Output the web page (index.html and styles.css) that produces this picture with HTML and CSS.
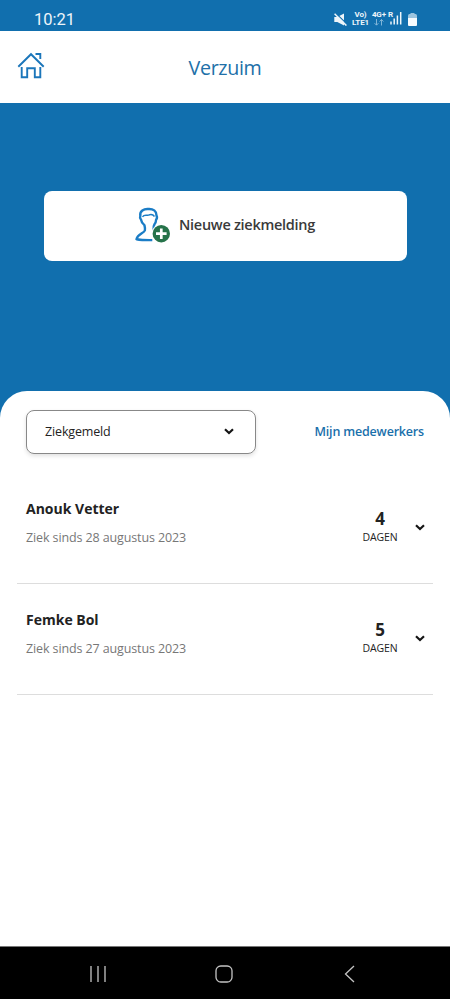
FILE: index.html
```html
<!DOCTYPE html>
<html lang="nl">
<head>
<meta charset="utf-8">
<title>Verzuim</title>
<link rel="stylesheet" href="styles.css">
</head>
<body>
<div class="statusbar">
  <span class="clock">10:21</span>
  <div class="status-icons">
    <svg class="mute" width="13" height="13" viewBox="0 0 13 13"><path d="M.3 4h3L10 .5v12L3.300 9H.3z" fill="#eef5fa"/><path d="M1.500 0l12 11.700" stroke="#116fae" stroke-width="1.200"/><path d="M.6 .8l11.800 11.800" stroke="#eef5fa" stroke-width="1.500"/></svg>
    <div class="stack volte"><span>Vo)</span><span>LTE1</span></div>
    <div class="stack data"><span>4G+</span><svg width="10" height="7" viewBox="0 0 10 7"><path d="M2.500 0v6M.6 4.200l1.900 2 1.900-2M7.500 6.500v-6M5.600 2.500l1.900-2 1.900 2" fill="none" stroke="#8dbddd" stroke-width=".9"/></svg></div>
    <div class="signal"><span>R</span><svg width="12" height="14" viewBox="0 0 12 14"><path d="M1 10.500V13.500M4.200 7.500V13.500M7.400 4.500V13.500M10.700 1V13.500" stroke="#eef5fa" stroke-width="1.500"/></svg></div>
    <svg class="battery" width="9" height="13" viewBox="0 0 9 13"><path d="M2.500 0h4v1.500h-4z" fill="#9cc4df"/><rect y="1" width="9" height="12" rx="1.500" fill="#9cc4df"/><path d="M0 5h9v6.500a1.500 1.500 0 0 1-1.500 1.500h-6A1.500 1.500 0 0 1 0 11.500z" fill="#f6fafd"/></svg>
  </div>
</div>
<header class="appbar">
  <svg class="home" width="28" height="28" viewBox="0 0 28 28" fill="none" stroke="#1b76ba" stroke-width="1.900"><path d="M1.300 14.700L14 2.200l12.700 12.500M18.500 2h4.800v5M4.700 15v10.200h5.500v-8.900h7.600v8.900h5.500V15"/></svg>
  <h1>Verzuim</h1>
</header>
<section class="hero">
  <div class="report">
    <svg class="person" width="36" height="38" viewBox="0 0 36 38"><g fill="none" stroke="#1b7dc6" stroke-linejoin="round"><path d="M18.600 24c.2-2.500-.4-4.800.8-6.700 1.400-1.300 1.600-2.800 1.700-4.600 1.300-1.400 1.100-2.700.4-4.200C21.500 3.800 18.200 1.800 13.600 2 8.700 1.500 4.600 4.300 5.300 8.700c-.7 1.600-.2 3 .9 4.400.3 2.500 1.600 3.800 3.200 5 .5 2 1 3.800.5 5.300C8.500 26.700 2.600 27 1.500 32.200c4.800.9 9.800 1 15.800.9" stroke-width="2.400"/><path d="M7.500 9.800c1.500-2.400 3.800-1 6-1.700 2.500-1 4.500-.7 6 1.400" stroke-width="1.400"/></g><circle cx="26.300" cy="26.700" r="9.800" fill="#fff"/><circle cx="26.300" cy="26.700" r="8.700" fill="#26734a"/><path d="M26.300 21.400v10.600M21 26.700h10.600" stroke="#fff" stroke-width="2.700"/></svg>
    <span>Nieuwe ziekmelding</span>
  </div>
</section>
<main class="panel">
  <div class="filters">
    <div class="select"><span>Ziekgemeld</span><svg width="10" height="7" viewBox="0 0 10 7"><path d="M1 1.300l4 3.800 4-3.800" fill="none" stroke="#151515" stroke-width="2.200"/></svg></div>
    <a class="link">Mijn medewerkers</a>
  </div>
  <div class="row">
    <div class="who"><strong>Anouk Vetter</strong><span>Ziek sinds 28 augustus 2023</span></div>
    <div class="days"><strong>4</strong><span>DAGEN</span></div>
    <svg class="chev" width="10" height="7" viewBox="0 0 10 7"><path d="M1 1.300l4 3.800 4-3.800" fill="none" stroke="#151515" stroke-width="2.200"/></svg>
  </div>
  <div class="row">
    <div class="who"><strong>Femke Bol</strong><span>Ziek sinds 27 augustus 2023</span></div>
    <div class="days"><strong>5</strong><span>DAGEN</span></div>
    <svg class="chev" width="10" height="7" viewBox="0 0 10 7"><path d="M1 1.300l4 3.800 4-3.800" fill="none" stroke="#151515" stroke-width="2.200"/></svg>
  </div>
</main>
<nav class="navbar">
  <svg width="18" height="18" viewBox="0 0 18 18"><path d="M2 1v16M9 1v16M16 1v16" stroke="#c4c4c4" stroke-width="1.300"/></svg>
  <svg width="18" height="18" viewBox="0 0 18 18"><rect x="1" y="1" width="16" height="16" rx="4.800" fill="none" stroke="#c4c4c4" stroke-width="1.300"/></svg>
  <svg width="18" height="18" viewBox="0 0 18 18"><path d="M13 1L4.500 9l8.500 8" fill="none" stroke="#c4c4c4" stroke-width="1.300"/></svg>
</nav>
</body>
</html>
```
FILE: styles.css
```css
* { box-sizing: border-box; }
body {
  margin: 0;
  height: 999px;
  display: flex;
  flex-direction: column;
  overflow: hidden;
  background: #116fae;
  font-family: "Open Sans", sans-serif;
  color: #222;
}
svg { display: block; flex: none; }
.statusbar {
  height: 31px;
  padding: 8px 33px 0 34px;
  display: flex;
  justify-content: space-between;
  font-family: Roboto, sans-serif;
  color: #eef5fa;
}
.clock { font-size: 16.5px; line-height: 23px; }
.status-icons { display: flex; align-items: flex-start; height: 23px; }
.mute { margin: 5px 5px 0 0; }
.stack {
  display: flex;
  flex-direction: column;
  align-items: center;
  font-size: 8px;
  letter-spacing: -.15px;
  font-weight: 700;
  line-height: 8px;
  padding-top: 3px;
}
.volte { margin-right: 3px; }
.data { margin-right: 2px; }
.signal { display: flex; padding-top: 3px; margin-right: 6px; }
.signal span { font-size: 8px; font-weight: 700; line-height: 8px; margin-right: -3px; }
.battery { margin-top: 5px; }
.appbar {
  height: 72px;
  background: #fff;
  display: grid;
  grid-template-columns: 28px 1fr 28px;
  align-items: center;
  padding: 0 17px;
}
.appbar h1 {
  margin: 2px 0 0;
  text-align: center;
  font-size: 19.7px;
  letter-spacing: -.35px;
  font-weight: 400;
  line-height: 26px;
  color: #2170a8;
}
.home { margin-top: -3px; }
.hero { height: 288px; padding: 88px 43px 0 44px; }
.report {
  height: 70px;
  background: #fff;
  border-radius: 8px;
  display: flex;
  align-items: center;
  padding-left: 91px;
  gap: 8px;
  font-size: 14.5px;
  letter-spacing: -.28px;
  font-weight: 600;
  color: #3a3a3a;
}
.report span { margin-top: -3px; white-space: nowrap; }
.panel {
  flex: 1;
  background: #fff;
  border-radius: 27px 27px 0 0;
  padding: 19px 17px 0;
}
.filters {
  display: flex;
  justify-content: space-between;
  align-items: center;
  padding: 0 9px;
  margin-bottom: 19px;
}
.select {
  width: 230px;
  height: 44px;
  border: 1px solid #888;
  border-radius: 8px;
  box-shadow: 0 2px 4px rgba(0, 0, 0, .12);
  display: flex;
  align-items: center;
  justify-content: space-between;
  padding: 0 21px 1px 18px;
  font-size: 12.5px;
  letter-spacing: -.15px;
}
.link { margin-top: -1px; font-size: 12.5px; letter-spacing: -.18px; font-weight: 600; color: #1a70ab; }
.row {
  height: 111px;
  display: flex;
  align-items: flex-start;
  border-bottom: 1px solid #ddd;
  padding: 25px 8px 0 9px;
}
.who { display: flex; flex-direction: column; flex: 1; }
.who strong { font-size: 14px; line-height: 21px; }
.who span { margin-top: 9px; font-size: 12.5px; letter-spacing: -.12px; line-height: 20px; color: #777; }
.days { width: 36px; display: flex; flex-direction: column; align-items: center; margin: 8px 1px 0 -1px; }
.days strong { font-size: 17px; line-height: 25px; }
.days span { font-size: 10.5px; line-height: 13px; letter-spacing: -.1px; }
.chev { margin: 26px 0 0 16px; }
.navbar {
  height: 53px;
  background: #000;
  border-top: 1px solid #777;
  display: flex;
  align-items: center;
  justify-content: space-between;
  padding: 1px 91px 0 89px;
}
```
